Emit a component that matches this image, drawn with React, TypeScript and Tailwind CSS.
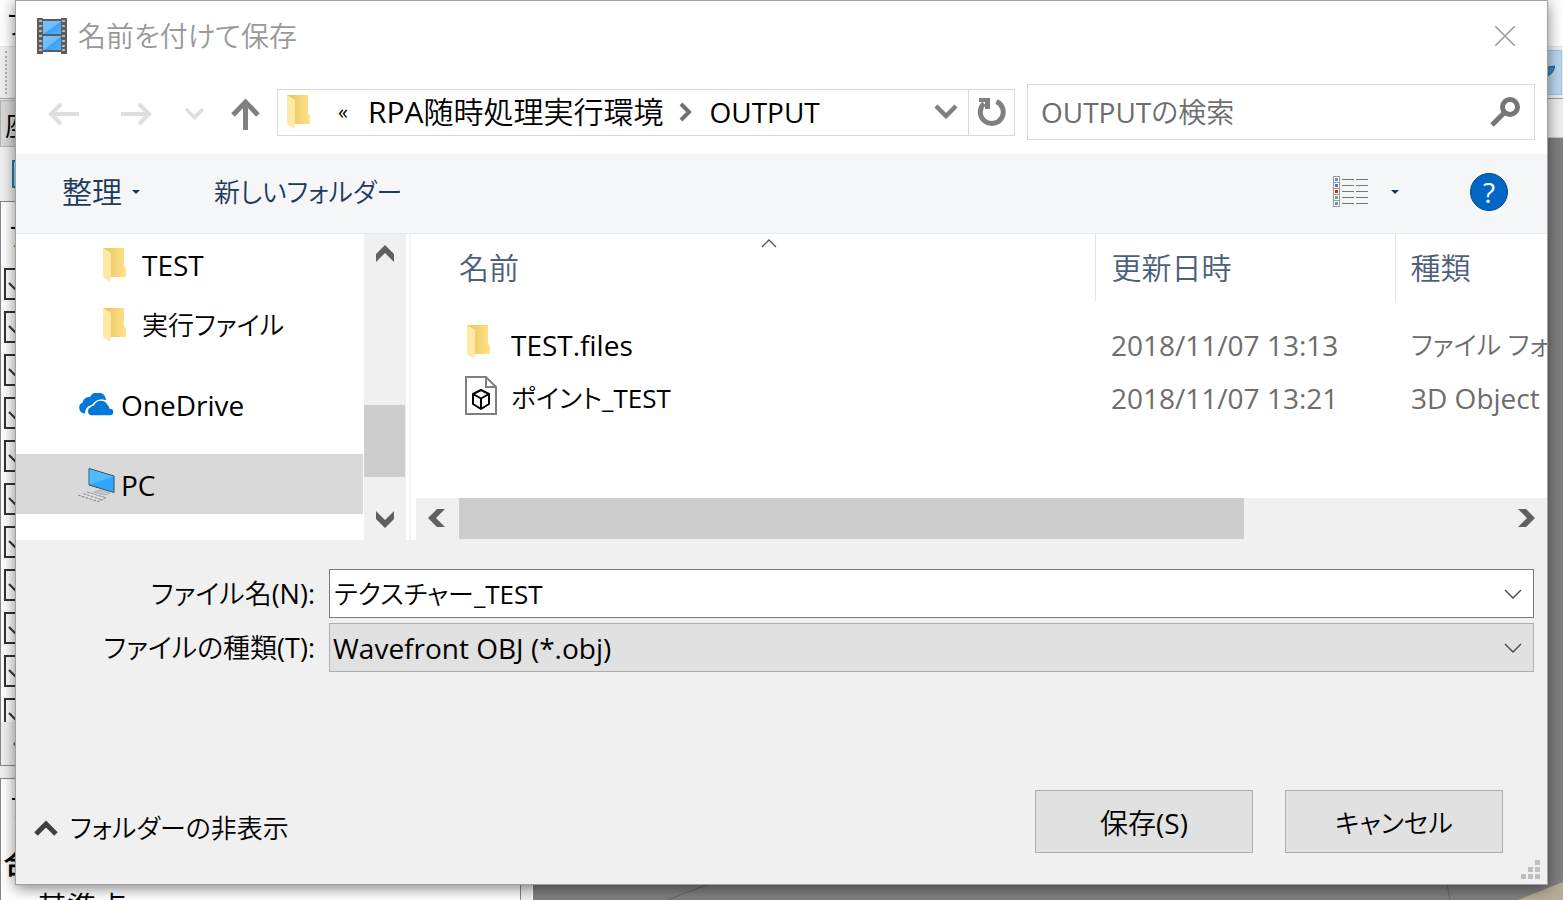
import { type ReactNode } from "react";

const cjk =
  "font-['Open_Sans','Noto_Sans_CJK_JP_DemiLight','Noto_Sans_CJK_JP_Light','Noto_Sans_CJK_JP',sans-serif] [font-feature-settings:'palt']";

function FolderIcon() {
  return (
    <svg width="26" height="36" viewBox="0 0 26 36" className="shrink-0" aria-hidden="true">
      <defs>
        <linearGradient id="folderBack" x1="0" y1="0" x2="1" y2="0">
          <stop offset="0.2" stopColor="#edc966" />
          <stop offset="1" stopColor="#ffe28a" />
        </linearGradient>
      </defs>
      <path d="M1 1H22V19L24 22V30H8L1 24Z" fill="url(#folderBack)" />
      <path d="M1 1L9 6V27L8 35L1 30Z" fill="#ffe9a6" />
    </svg>
  );
}

function FilmIcon() {
  const holes = [3, 8, 13, 18, 23, 28, 32];
  return (
    <svg width="32" height="38" viewBox="0 0 32 38" className="shrink-0" aria-hidden="true">
      <defs>
        <linearGradient id="frame" x1="0" y1="0" x2="1" y2="1">
          <stop offset="0" stopColor="#7cc3fb" />
          <stop offset="0.5" stopColor="#6cbcfb" />
          <stop offset="0.55" stopColor="#3f9ff5" />
          <stop offset="1" stopColor="#55aefa" />
        </linearGradient>
      </defs>
      <path d="M1 1H7V2H25V1H31V37H25V35H7V37H1Z" fill="#5c5c5e" />
      <rect x="7" y="4" width="18" height="13" fill="url(#frame)" />
      <rect x="7" y="19" width="18" height="14" fill="url(#frame)" />
      {holes.map((y) => (
        <g key={y} fill="#b5b5b7">
          <rect x="3" y={y} width="3" height="2" />
          <rect x="26" y={y} width="3" height="2" />
        </g>
      ))}
    </svg>
  );
}

function CloudIcon() {
  return (
    <svg width="37" height="24" viewBox="0 0 37 24" className="shrink-0" aria-hidden="true">
      <path d="M7 20.500A5.800 5.800 0 0 1 4.500 9.500A7 7 0 0 1 12 4A8.500 8.500 0 0 1 28 7Q17 7 14 12Q7 13 7 20.500Z" fill="#0078d7" />
      <path d="M13 23A5 5 0 0 1 12.500 13.500A4 4 0 0 1 15.500 12A8 8 0 0 1 30 11.500A5 5 0 0 1 32 15A4 4 0 0 1 32 23Z" fill="#0078d7" stroke="#fff" strokeWidth="1.500" />
    </svg>
  );
}

function PcIcon() {
  return (
    <svg width="37" height="36" viewBox="0 0 37 36" className="shrink-0" aria-hidden="true">
      <path d="M0 28L9 25L28 31L20 35Z" fill="#dfe2e5" />
      <path d="M0 28L20 34.500L28 31M5 26.500L23 32.500M9 25L27 30.500" stroke="#7f868c" strokeWidth="1" fill="none" strokeDasharray="3 1" />
      <path d="M16 25L22 23L32 26L27 28Z" fill="#c3c8cc" stroke="#8f969b" strokeWidth="0.500" />
      <path d="M11 1.500L36 9V25.500L11 18Z" fill="#2fa8fb" stroke="#3d4c58" />
      <path d="M11.500 2.200L35.500 9.400L11.500 17.500Z" fill="#52bbff" />
    </svg>
  );
}

function ObjectIcon() {
  return (
    <svg width="34" height="41" viewBox="0 0 34 41" className="shrink-0" aria-hidden="true">
      <path d="M2 2H22L32 12V39H2Z" fill="#fff" stroke="#808080" strokeWidth="2" />
      <path d="M22 2V12H32" fill="none" stroke="#808080" strokeWidth="2" />
      <path d="M17 15L25 19V29L17 34L9 29V19ZM9 19L17 23.500L25 19M17 23.500V34" fill="none" stroke="#000" strokeWidth="2" strokeLinejoin="round" />
    </svg>
  );
}

function Chevron({ dir }: { dir: "up" | "down" | "left" | "right" }) {
  const d = {
    up: "M1 9L10 0L19 9V17L10 8L1 17Z",
    down: "M1 3L10 12L19 3V11L10 20L1 11Z",
    left: "M9 1H17L8 10L17 19H9L0 10Z",
    right: "M3 1H11L20 10L11 19H3L12 10Z",
  }[dir];
  return (
    <svg width="20" height="20" viewBox="0 0 20 20" aria-hidden="true">
      <path d={d} fill="#606060" />
    </svg>
  );
}

function ThinChevron() {
  return (
    <svg width="18" height="10" viewBox="0 0 18 10" fill="none" stroke="#444" strokeWidth="1.300" aria-hidden="true">
      <path d="M1 1L9 9L17 1" />
    </svg>
  );
}

function Caret() {
  return (
    <svg width="8" height="4" viewBox="0 0 8 4" aria-hidden="true">
      <path d="M0 0H8L4 4Z" fill="#1a3560" />
    </svg>
  );
}

function TreeItem({ icon, label, nested, selected }: { icon: ReactNode; label: ReactNode; nested?: boolean; selected?: boolean }) {
  return (
    <li>
      <button
        type="button"
        className={`flex h-15 w-full items-center pt-[2px] text-left ${nested ? "gap-[14px] pl-[86px]" : "gap-[6px] pl-[62px]"} ${selected ? "bg-[#d9d9d9]" : ""}`}
      >
        {icon}
        {label}
      </button>
    </li>
  );
}

function Background() {
  return (
    <div aria-hidden="true" className="flex min-h-screen flex-col bg-[#f0f0f0]">
      <div className="h-[47px] border-b border-[#e5e5e5] bg-white pl-[7px] leading-[48px]">フ</div>
      <div className="flex h-[52px] items-center justify-between border-b border-[#a0a0a0] pr-px pl-[5px]">
        <div className="h-[43px] border-l-2 border-dotted border-[#b0b0b0]" />
        <div className="flex h-[45px] w-12 items-center justify-end border border-[#90c8f6] bg-[#bcd8ee] pr-[6px]">
          <svg width="20" height="16" viewBox="0 0 20 16">
            <path d="M1 4L20 1Q18 10 10 12Z" fill="#3f86c9" stroke="#27598c" />
          </svg>
        </div>
      </div>
      <div className="flex grow">
        <div className="flex w-[521px] flex-col">
          <div className="mt-px h-[47px] w-40 border border-[#b4b4b4] bg-[#d9d9d9] pl-1 leading-[48px]">座</div>
          <div className="mt-[13px] ml-3 h-7 w-7 border-2 border-[#1583b5] bg-[#c5dcea]" />
          <div className="mt-[13px] h-[565px] border border-[#828790] bg-white">
            <div className="h-[66px] pl-[8px] leading-[68px]">フ</div>
            <div className="flex h-[454px] flex-col gap-[11px] overflow-hidden pl-[3px]">
              {Array.from({ length: 11 }, (_, i) => (
                <svg key={i} width="32" height="32" viewBox="0 0 32 32" className="shrink-0" fill="none" stroke="#333">
                  <path d="M1 1H31V31H1Z" strokeWidth="2" />
                  <path d="M5 15L13 23L27 8" strokeWidth="2" />
                </svg>
              ))}
            </div>
            <div className="flex h-[43px] items-center bg-[#f0f0f0] pl-3">
              <Chevron dir="left" />
            </div>
          </div>
          <div className="mt-3 grow border border-b-0 border-[#828790] bg-white">
            <div className="h-14 pl-[9px] leading-14">プ</div>
            <div className="h-14 pl-[3px] leading-14 font-bold">合</div>
            <div className="h-2 pl-9 text-[30px] leading-8">基準点</div>
          </div>
        </div>
        <div className="w-3 border-r border-white" />
        <div className="flex grow flex-col">
          <div className="h-[39px] border-b border-[#c8c8c8]" />
          <div className="flex grow items-end justify-end bg-[#808080]">
            <svg width="900" height="20" viewBox="0 0 900 20">
              <path d="M4 20L46 4M784 4L787 20" stroke="#666" fill="none" />
              <path d="M855 20Q880 10 900 2V20Z" fill="#b5ad98" />
            </svg>
          </div>
        </div>
      </div>
    </div>
  );
}

function TitleBar() {
  return (
    <header className="flex h-[72px] items-center justify-between pr-8 pb-[3px] pl-5">
      <div className="flex items-center gap-[10px]">
        <FilmIcon />
        <h1 id="dialog-title" className="text-[#999]">名前を付けて保存</h1>
      </div>
      <button type="button" aria-label="閉じる">
        <svg width="20" height="20" viewBox="0 0 20 20" stroke="#999" strokeWidth="1.500">
          <path d="M0 0L20 20M20 0L0 20" />
        </svg>
      </button>
    </header>
  );
}

function NavRow() {
  return (
    <div className="flex h-[81px] items-center gap-3 pr-3 pb-[3px] pl-8">
      <nav className="flex w-[217px] items-center pt-1" aria-label="移動">
        <button type="button" aria-label="戻る" className="mr-[42px]">
          <svg width="31" height="24" viewBox="0 0 31 24" fill="none" stroke="#dedede" strokeWidth="4">
            <path d="M31 12H4M13 2L3 12L13 22" />
          </svg>
        </button>
        <button type="button" aria-label="進む" className="mr-[33px]">
          <svg width="31" height="24" viewBox="0 0 31 24" fill="none" stroke="#dedede" strokeWidth="4">
            <path d="M0 12H27M18 2L28 12L18 22" />
          </svg>
        </button>
        <button type="button" aria-label="履歴" className="mr-[27px]">
          <svg width="19" height="12" viewBox="0 0 19 12" fill="none" stroke="#dedede" strokeWidth="3.500">
            <path d="M1 1L9.500 9.500L18 1" />
          </svg>
        </button>
        <button type="button" aria-label="上へ">
          <svg width="29" height="32" viewBox="0 0 29 32" fill="none" stroke="#808080" strokeWidth="5">
            <path d="M14.500 32V5M2 17L14.500 4L27 17" />
          </svg>
        </button>
      </nav>
      <div className="flex h-[47px] grow items-stretch border border-[#d9d9d9]">
        <div className="flex grow items-center overflow-hidden pl-2 whitespace-nowrap">
          <FolderIcon />
          <button type="button" className="ml-[26px] text-xl leading-8">«</button>
          <button type="button" className="ml-5 text-[30px]">RPA随時処理実行環境</button>
          <svg width="13" height="20" viewBox="0 0 13 20" fill="none" stroke="#707070" strokeWidth="4" className="mr-[17px] ml-4 shrink-0">
            <path d="M2 2L10 10L2 18" />
          </svg>
          <button type="button">OUTPUT</button>
        </div>
        <button type="button" aria-label="以前の場所" className="px-[10px]">
          <svg width="24" height="16" viewBox="0 0 24 16" fill="none" stroke="#808080" strokeWidth="4.500">
            <path d="M2 2L12 12L22 2" />
          </svg>
        </button>
        <button type="button" aria-label="更新" className="border-l border-[#d9d9d9] px-2">
          <svg width="29" height="30" viewBox="0 0 29 30" fill="none" stroke="#808080">
            <path d="M19.500 4.500A11.500 11.500 0 1 1 7 6.500" strokeWidth="5" />
            <path d="M2 1H13V12H8V5H2Z" fill="#808080" stroke="none" />
          </svg>
        </button>
      </div>
      <label className="flex h-14 w-[508px] items-center justify-between border border-[#d9d9d9] pr-[13px] pl-[13px]">
        <input type="search" aria-label="OUTPUTの検索" placeholder="OUTPUTの検索" className="min-w-0 grow outline-none placeholder:text-[#6d6d6d]" />
        <svg width="32" height="30" viewBox="0 0 32 30" fill="none" stroke="#767676">
          <circle cx="21" cy="10" r="7.500" strokeWidth="5" />
          <path d="M16 15L3 28" strokeWidth="5" />
        </svg>
      </label>
    </div>
  );
}

function CommandBar() {
  const marks = ["#4a9bd0", "#6b6f9b", "#d02a10", "#7fae55", "#4a9bd0"];
  return (
    <div className="flex h-20 items-center border-b border-[#e5e8ec] bg-[#f4f6f8] pr-[39px] pb-[3px] pl-[46px] text-[#1e395b]">
      <button type="button" className="flex items-center gap-[10px]">
        <span className="text-[30px]">整理</span>
        <Caret />
      </button>
      <button type="button" className="ml-[74px] text-[26px]">新しいフォルダー</button>
      <button type="button" aria-label="表示方法の変更" className="ml-auto flex items-center gap-[22px]">
        <svg width="36" height="32" viewBox="0 0 36 32">
          {marks.map((color, i) => (
            <g key={i}>
              <rect x="0.500" y={i * 6 + 0.5} width="6" height="6" fill="#fff" stroke="#999" />
              <rect x="2" y={i * 6 + 2} width="3" height="3" fill={color} />
              <path d={`M9 ${i * 6 + 3.5}H21M23 ${i * 6 + 3.5}H35`} stroke="#777" />
            </g>
          ))}
        </svg>
        <Caret />
      </button>
      <button
        type="button"
        aria-label="ヘルプ"
        className="ml-[71px] flex h-[38px] w-[38px] items-center justify-center rounded-full border border-[#0f3f73] bg-[#0067c7] text-white"
      >
        ?
      </button>
    </div>
  );
}

function Sidebar() {
  return (
    <div className="flex w-[390px] shrink-0 bg-white">
      <ul className="w-[347px] overflow-hidden">
        <TreeItem nested icon={<FolderIcon />} label="TEST" />
        <TreeItem nested icon={<FolderIcon />} label={<span className="text-[26px]">実行ファイル</span>} />
        <li className="h-5" />
        <TreeItem icon={<CloudIcon />} label="OneDrive" />
        <li className="h-5" />
        <TreeItem selected icon={<PcIcon />} label="PC" />
      </ul>
      <div className="ml-px flex w-[42px] flex-col items-center justify-between bg-[#f0f0f0] pt-[11px] pr-px pb-3">
        <button type="button" aria-label="上へスクロール"><Chevron dir="up" /></button>
        <div className="mt-[108px] h-[72px] w-full bg-[#cdcdcd]" />
        <button type="button" aria-label="下へスクロール"><Chevron dir="down" /></button>
      </div>
    </div>
  );
}

function FileList() {
  const files = [
    { icon: <FolderIcon />, name: "TEST.files", date: "2018/11/07 13:13", kind: "ファイル フォルダー", pad: "pl-[55px] gap-[19px]", kindSize: "text-[26px]" },
    { icon: <ObjectIcon />, name: "ポイント_TEST", date: "2018/11/07 13:21", kind: "3D Object", pad: "pl-[53px] gap-[13px] text-[26px]", kindSize: "" },
  ];
  return (
    <div className="flex min-w-0 grow flex-col bg-white">
      <div className="grow overflow-hidden">
        <table className="w-full table-fixed border-collapse whitespace-nowrap">
          <thead className="text-left text-[30px] text-[#4c607a]">
            <tr className="h-[67px]">
              <th className="relative w-[684px] border-r border-[#e5e5e5] pl-12 font-light">
                名前
                <svg width="16" height="9" viewBox="0 0 16 9" fill="none" stroke="#555" className="absolute top-[5px] left-[350px]" aria-hidden="true">
                  <path d="M1 8L8 1L15 8" strokeWidth="1.300" />
                </svg>
              </th>
              <th className="w-[300px] border-r border-[#e5e5e5] pl-4 font-light">更新日時</th>
              <th className="pl-[15px] font-light">種類</th>
            </tr>
          </thead>
          <tbody className="text-[#6d6d6d] before:block before:h-[17px]">
            {files.map((file) => (
              <tr key={file.name} className="h-[53px]">
                <td className="p-0 text-black">
                  <div className={`flex items-center ${file.pad}`}>
                    <span className="pb-[5px]">{file.icon}</span>
                    {file.name}
                  </div>
                </td>
                <td className="py-0 pl-4">{file.date}</td>
                <td className={`overflow-hidden py-0 pl-4 ${file.kindSize}`}>{file.kind}</td>
              </tr>
            ))}
          </tbody>
        </table>
      </div>
      <div className="ml-[5px] flex h-[42px] items-start bg-[#f0f0f0] px-3">
        <button type="button" aria-label="左へスクロール" className="h-10"><Chevron dir="left" /></button>
        <div className="mr-auto ml-[11px] h-[41px] w-[785px] bg-[#cdcdcd]" />
        <button type="button" aria-label="右へスクロール" className="h-10"><Chevron dir="right" /></button>
      </div>
    </div>
  );
}

function Footer() {
  return (
    <footer className="relative h-[344px] bg-[#f0f0f0]">
      <div className="grid grid-cols-[299px_1fr] items-center gap-x-[14px] gap-y-[5px] pt-[29px] pr-[13px]">
        <label htmlFor="file-name" className="text-right text-[27px] whitespace-nowrap">ファイル名(N):</label>
        <div className="flex h-[49px] border border-[#7a7a7a] bg-white">
          <input id="file-name" defaultValue="テクスチャー_TEST" className="min-w-0 grow pl-1 text-[26px] outline-none" />
          <button type="button" aria-label="候補を表示" className="px-[11px]">
            <ThinChevron />
          </button>
        </div>
        <label htmlFor="file-kind" className="text-right text-[27px] whitespace-nowrap">ファイルの種類(T):</label>
        <div className="grid h-[49px] border border-[#adadad] bg-[#e1e1e1]">
          <select id="file-kind" className="col-start-1 row-start-1 w-full appearance-none pl-[3px] outline-none">
            <option>Wavefront OBJ (*.obj)</option>
          </select>
          <span className="pointer-events-none col-start-1 row-start-1 mr-[11px] self-center justify-self-end">
            <ThinChevron />
          </span>
        </div>
      </div>
      <div className="mt-[118px] flex items-center gap-8 pr-11 pl-[18px]">
        <button type="button" className="mt-3 mr-auto flex items-center gap-3 text-[26px] whitespace-nowrap">
          <svg width="24" height="16" viewBox="0 0 24 16" fill="none" stroke="#404040" strokeWidth="5" aria-hidden="true">
            <path d="M2 14L12 4L22 14" />
          </svg>
          フォルダーの非表示
        </button>
        <button type="button" className="h-[63px] w-[218px] border border-[#adadad] bg-[#e1e1e1] pt-[2px]">保存(S)</button>
        <button type="button" className="h-[63px] w-[218px] border border-[#adadad] bg-[#e1e1e1] pt-[2px] text-[26px]">キャンセル</button>
      </div>
      <svg width="20" height="20" viewBox="0 0 20 20" className="absolute right-[6px] bottom-1" fill="#bfbfbf" aria-hidden="true">
        <path d="M14 0H19V5H14ZM7 7H12V12H7ZM14 7H19V12H14ZM0 14H5V19H0ZM7 14H12V19H7ZM14 14H19V19H14Z" />
      </svg>
    </footer>
  );
}

export default function App() {
  return (
    <div className={`relative overflow-hidden text-[28px] leading-9 font-normal text-black ${cjk}`}>
      <Background />
      <div
        role="dialog"
        aria-labelledby="dialog-title"
        className="absolute inset-x-[15px] top-0 border border-[#a0a0a0] bg-white shadow-[0_3px_14px_rgba(0,0,0,0.5)]"
      >
        <TitleBar />
        <NavRow />
        <CommandBar />
        <div className="flex h-[306px]">
          <Sidebar />
          <div className="ml-[3px] w-[2px] shrink-0 bg-[#f5f5f5]" />
          <FileList />
        </div>
        <Footer />
      </div>
    </div>
  );
}
